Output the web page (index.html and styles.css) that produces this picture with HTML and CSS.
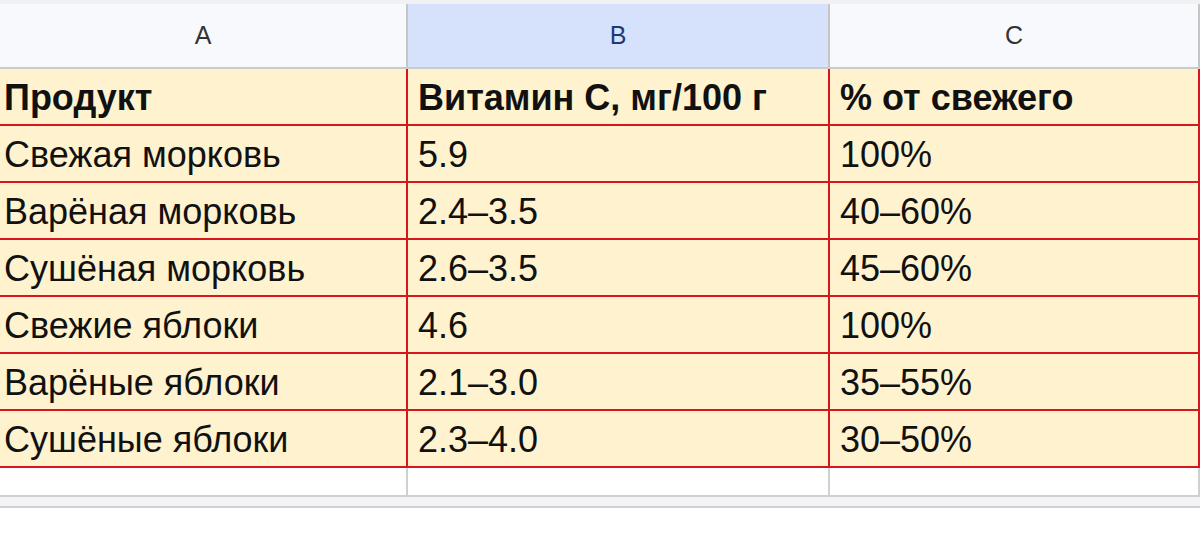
FILE: index.html
```html
<!DOCTYPE html>
<html lang="ru">
<head>
<meta charset="utf-8">
<title>Витамин C</title>
<link rel="stylesheet" href="styles.css">
</head>
<body>
<div class="sheet">
  <div class="topstrip"></div>
  <div class="colheads">
    <div class="ch">A</div>
    <div class="ch sel">B</div>
    <div class="ch">C</div>
  </div>
  <div class="grid">
    <div class="cell b">Продукт</div><div class="cell b">Витамин C, мг/100 г</div><div class="cell b">% от свежего</div>
    <div class="cell">Свежая морковь</div><div class="cell">5.9</div><div class="cell">100%</div>
    <div class="cell">Варёная морковь</div><div class="cell">2.4–3.5</div><div class="cell">40–60%</div>
    <div class="cell">Сушёная морковь</div><div class="cell">2.6–3.5</div><div class="cell">45–60%</div>
    <div class="cell">Свежие яблоки</div><div class="cell">4.6</div><div class="cell">100%</div>
    <div class="cell">Варёные яблоки</div><div class="cell">2.1–3.0</div><div class="cell">35–55%</div>
    <div class="cell">Сушёные яблоки</div><div class="cell">2.3–4.0</div><div class="cell">30–50%</div>
  </div>
  <div class="blank">
    <div class="bc"></div><div class="bc"></div><div class="bc"></div>
  </div>
  <div class="bottomstrip"></div>
</div>
</body>
</html>
```
FILE: styles.css
```css
html, body { margin: 0; padding: 0; background: #ffffff; }
body { font-family: "Liberation Sans", Arial, sans-serif; color: #111; }
.sheet { width: 1200px; }
.topstrip { height: 4px; background: #f1f1f4; }
.colheads {
  display: grid;
  grid-template-columns: 408px 422px 370px;
  height: 63px;
  background: #f8f9fc;
}
.ch {
  display: flex; align-items: center; justify-content: center;
  font-size: 25px; color: #333;
  border-right: 2px solid #c6c6c6;
}
.ch.sel { background: #d6e2fb; color: #1d3a78; }
.grid {
  display: grid;
  grid-template-columns: 408px 422px 370px;
  grid-auto-rows: 57px;
  border-top: 2px solid #cbcbcd;
  background: #fef2cf;
}
.cell {
  display: flex; align-items: center;
  padding: 3px 0 0 4px;
  font-size: 36px;
  border-bottom: 2px solid #d9161e;
  border-right: 2px solid #d9161e;
  box-sizing: border-box;
  white-space: nowrap;
  overflow: hidden;
}
.cell:nth-child(3n+2), .cell:nth-child(3n) { padding-left: 10px; }
.cell.b { font-weight: bold; }
.blank {
  display: grid;
  grid-template-columns: 408px 422px 370px;
  height: 27px;
  border-bottom: 2px solid #cfcfd2;
}
.bc { border-right: 2px solid #d0d0d0; }
.bottomstrip {
  height: 9px; background: #f3f2f7;
  border-bottom: 2px solid #d0d0d4;
}
```
